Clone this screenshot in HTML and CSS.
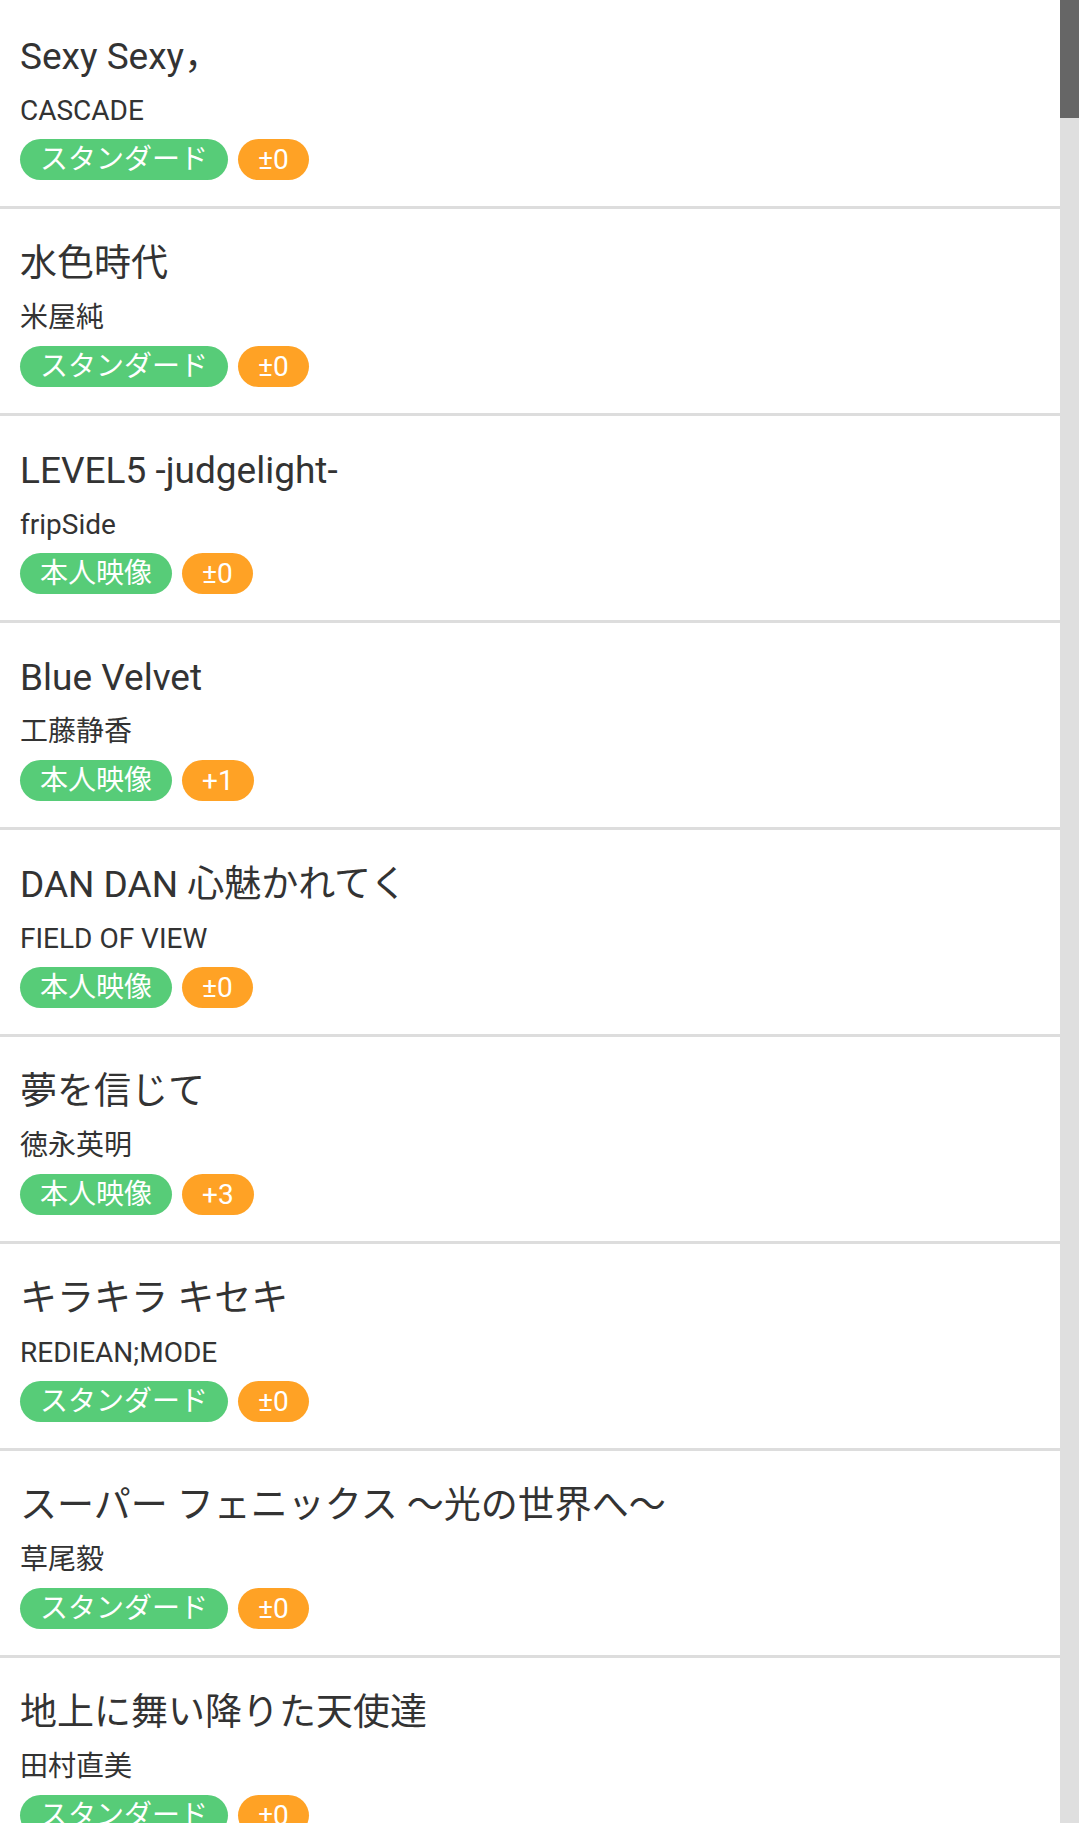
FILE: index.html
```html
<!DOCTYPE html>
<html lang="ja">
  <head>
    <meta charset="UTF-8" />
    <meta name="viewport" content="width=device-width, initial-scale=1.0" />
    <title>曲リスト</title>
    <link rel="stylesheet" href="styles.css">
  </head>
  <body>
    <div id="page">
      <div id="songs">
        <div class="song">
          <div class="title">Sexy Sexy，</div>
          <div class="artist">CASCADE</div>
          <div class="tags"><span class="tag type">スタンダード</span><span class="tag key">±0</span></div>
        </div>
        <div class="song">
          <div class="title">水色時代</div>
          <div class="artist">米屋純</div>
          <div class="tags"><span class="tag type">スタンダード</span><span class="tag key">±0</span></div>
        </div>
        <div class="song">
          <div class="title">LEVEL5 -judgelight-</div>
          <div class="artist">fripSide</div>
          <div class="tags"><span class="tag type">本人映像</span><span class="tag key">±0</span></div>
        </div>
        <div class="song">
          <div class="title">Blue Velvet</div>
          <div class="artist">工藤静香</div>
          <div class="tags"><span class="tag type">本人映像</span><span class="tag key">+1</span></div>
        </div>
        <div class="song">
          <div class="title">DAN DAN 心魅かれてく</div>
          <div class="artist">FIELD OF VIEW</div>
          <div class="tags"><span class="tag type">本人映像</span><span class="tag key">±0</span></div>
        </div>
        <div class="song">
          <div class="title">夢を信じて</div>
          <div class="artist">徳永英明</div>
          <div class="tags"><span class="tag type">本人映像</span><span class="tag key">+3</span></div>
        </div>
        <div class="song">
          <div class="title">キラキラ キセキ</div>
          <div class="artist">REDIEAN;MODE</div>
          <div class="tags"><span class="tag type">スタンダード</span><span class="tag key">±0</span></div>
        </div>
        <div class="song">
          <div class="title">スーパー フェニックス 〜光の世界へ〜</div>
          <div class="artist">草尾毅</div>
          <div class="tags"><span class="tag type">スタンダード</span><span class="tag key">±0</span></div>
        </div>
        <div class="song">
          <div class="title">地上に舞い降りた天使達</div>
          <div class="artist">田村直美</div>
          <div class="tags"><span class="tag type">スタンダード</span><span class="tag key">±0</span></div>
        </div>
      </div>
      <div id="scrollbar">
        <div id="thumb"></div>
      </div>
    </div>
  </body>
</html>
```

FILE: styles.css
```css
* {
  margin: 0;
  padding: 0;
  box-sizing: border-box;
  font-family: Roboto, "Noto Sans CJK JP", sans-serif;
}
body {
  background-color: #fff;
  color: #333;
  overflow: hidden;
}
#page {
  display: flex;
  height: 1823px;
  overflow: hidden;
}
#songs {
  flex-grow: 1;
  padding-top: 2px;
}
.song {
  padding: 33px 20px 26px;
  border-bottom: 3px solid #dddddd;
  height: 207px;
}
.title {
  font-size: 37px;
  line-height: 44px;
  white-space: nowrap;
}
.artist {
  font-size: 28px;
  line-height: 34px;
  margin-top: 15px;
}
.tags {
  display: flex;
  gap: 10px;
  margin-top: 11px;
}
.tag {
  color: white;
  font-size: 28px;
  line-height: 41px;
  height: 41px;
  padding: 0 20px;
  border-radius: 21px;
}
.tag.type {
  background-color: #57cc78;
}
.tag.key {
  background-color: #ffa225;
}
#scrollbar {
  width: 19px;
  background-color: #dfdfdf;
}
#thumb {
  height: 118px;
  background-color: #666;
}
```
